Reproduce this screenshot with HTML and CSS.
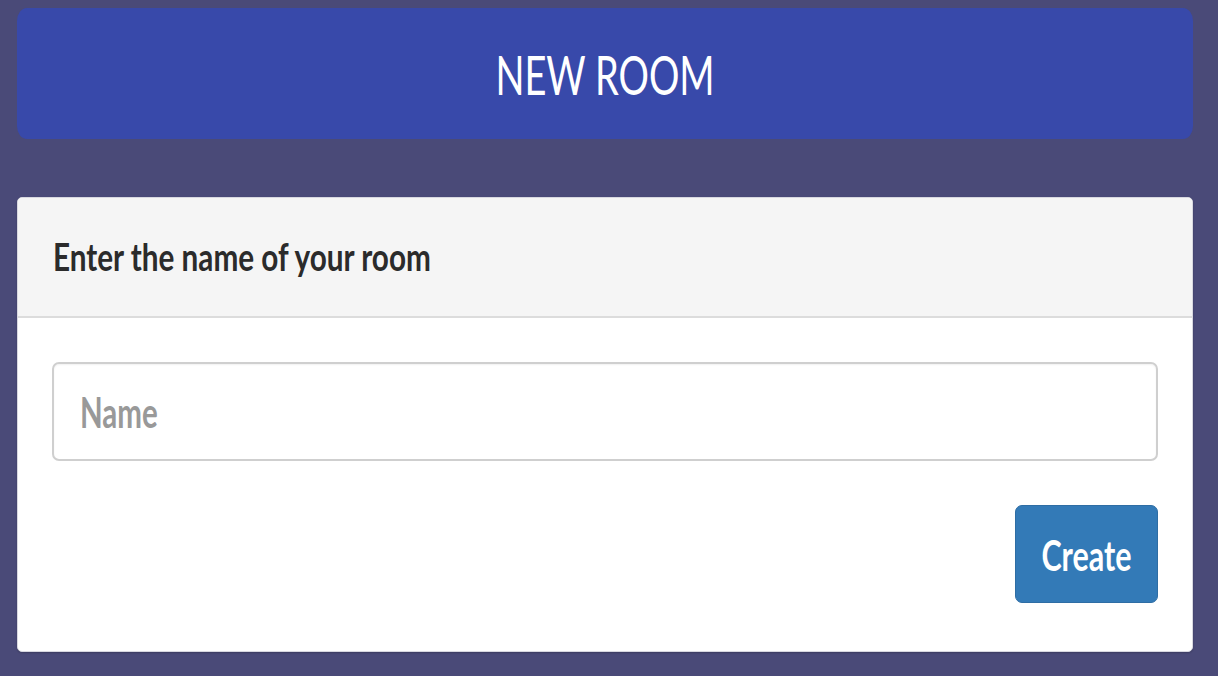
FILE: index.html
```html
<!DOCTYPE html>
<html lang="en">
<head>
<meta charset="utf-8">
<title>New Room</title>
<link rel="stylesheet" href="styles.css">
</head>
<body>
<main class="page">
  <header class="banner"><h1 class="banner-title"><span class="stretch">NEW ROOM</span></h1></header>
  <section class="card">
    <div class="card-head"><h2 class="card-title"><span class="stretch stretch-sm">Enter the name of your room</span></h2></div>
    <div class="card-body">
      <div class="field" role="textbox" aria-label="Name"><span class="stretch placeholder">Name</span></div>
      <div class="actions">
        <button class="btn" type="button"><span class="stretch">Create</span></button>
      </div>
    </div>
  </section>
</main>
</body>
</html>
```
FILE: styles.css
```css
* { box-sizing: border-box; }
html, body { margin: 0; height: 100%; }
body {
  background: #4a4a78;
  font-family: Lato, "Open Sans", sans-serif;
}
.page {
  width: 1176px;
  margin-left: 17px;
  padding-top: 8px;
  display: flex;
  flex-direction: column;
  gap: 58px;
}
.stretch {
  display: inline-block;
  transform: scaleY(1.4);
}
.stretch-sm {
  transform: scaleY(1.28);
}
.banner {
  height: 131px;
  background: #3849aa;
  border-radius: 10px / 13px;
  display: flex;
  align-items: center;
  justify-content: center;
}
.banner-title {
  margin: 0;
  color: #fff;
  font-weight: 400;
  font-size: 38px;
  line-height: 1;
}
.card {
  height: 455px;
  background: #fff;
  border: 1px solid #d8d8e0;
  border-radius: 5px;
  overflow: hidden;
  box-shadow: 0 1px 2px rgba(0,0,0,.2);
}
.card-head {
  height: 120px;
  background: #f5f5f5;
  border-bottom: 2px solid #dcdcdc;
  display: flex;
  align-items: center;
  padding-left: 35px;
}
.card-title {
  margin: 0;
  color: #2b2b2b;
  font-weight: 700;
  font-size: 29.7px;
  line-height: 1;
}
.card-body {
  padding: 44px 34px 0 34px;
  display: flex;
  flex-direction: column;
  gap: 44px;
}
.field {
  height: 99px;
  border: 2px solid #cfcfcf;
  border-radius: 7px;
  display: flex;
  align-items: center;
  padding-left: 26px;
  box-shadow: inset 0 1px 2px rgba(0,0,0,.06);
}
.placeholder {
  color: #999;
  font-size: 29.5px;
  font-weight: 700;
  line-height: 1;
}
.actions {
  display: flex;
  justify-content: flex-end;
}
.btn {
  width: 143px;
  height: 98px;
  background: #337ab7;
  border: 1px solid #2e6da4;
  border-radius: 7px;
  color: #fff;
  font-family: inherit;
  font-size: 30.5px;
  font-weight: 700;
  line-height: 1;
  padding: 0;
  display: flex;
  align-items: center;
  justify-content: center;
}
```
